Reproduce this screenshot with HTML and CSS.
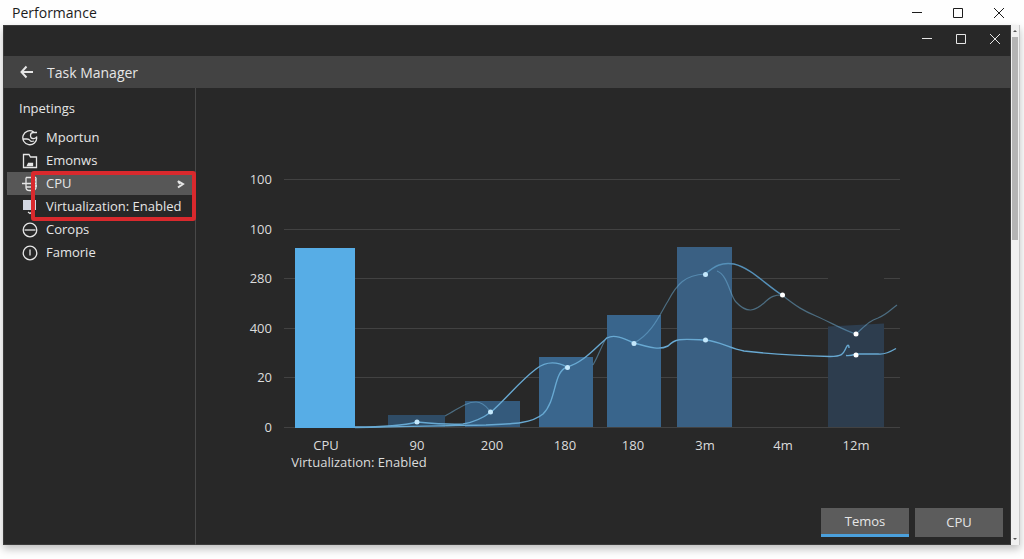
FILE: index.html
```html
<!DOCTYPE html>
<html lang="en">
  <head>
    <meta charset="UTF-8" />
    <meta name="viewport" content="width=device-width, initial-scale=1.0" />
    <title>Performance</title>
    <link rel="stylesheet" href="styles.css">
  </head>
  <body>
    <header class="titlebar">
      <h1 class="titlebar-name">Performance</h1>
      <div class="controls">
        <button class="control" aria-label="Minimize"><svg width="12" height="12" viewBox="0 0 12 12"><path d="M1 5.500h10" /></svg></button>
        <button class="control" aria-label="Maximize"><svg width="12" height="12" viewBox="0 0 12 12"><path d="M1.500 1.500h9v9h-9z" /></svg></button>
        <button class="control" aria-label="Close"><svg width="12" height="12" viewBox="0 0 12 12"><path d="M1 1l10 10M11 1L1 11" /></svg></button>
      </div>
    </header>
    <div class="frame">
      <div class="window">
        <div class="controls controls-inner">
          <button class="control" aria-label="Minimize window"><svg width="12" height="12" viewBox="0 0 12 12"><path d="M1 5.500h10" /></svg></button>
          <button class="control" aria-label="Maximize window"><svg width="12" height="12" viewBox="0 0 12 12"><path d="M1.500 1.500h9v9h-9z" /></svg></button>
          <button class="control" aria-label="Close window"><svg width="12" height="12" viewBox="0 0 12 12"><path d="M1 1l10 10M11 1L1 11" /></svg></button>
        </div>
        <div class="toolbar">
          <button class="back" aria-label="Back"><svg width="14" height="14" viewBox="0 0 14 14"><path d="M13 7H1.500M6.500 1.500L1.500 7l5 5.500" /></svg></button>
          <h2 class="toolbar-name">Task Manager</h2>
        </div>
        <div class="content">
          <nav class="sidebar">
            <h3 class="sidebar-name">Inpetings</h3>
            <a class="item" href="#mportun">
              <svg class="icon" viewBox="0 0 16 16"><path d="M11.500 1.800A7 7 0 1 0 14.800 7.500M15 2.500H11.500Q8.500 2.500 8.500 5.500T11 8.500Q13.500 9 15 6.500M1 9h4q2 0 3 1.500t4 .5" /></svg>
              Mportun
            </a>
            <a class="item" href="#emonws">
              <svg class="icon" viewBox="0 0 16 16"><path d="M1.500 14.500v-13h5.500l1.500 2.500h6v10.500z" /><path d="M5.500 12.500l1-2h4v2z" fill="currentColor" /></svg>
              Emonws
            </a>
            <div class="marked">
              <a class="item item-active" href="#cpu">
                <svg class="icon" viewBox="0 0 16 16"><path d="M4 1.500h10M4 1.500v10q0 3 3.500 3H10q4 0 4-3.500V1.500M0 7.500h14M4 11h5M10 4h4M10 10h5" /></svg>
                CPU
                <svg class="chevron" viewBox="0 0 8 10"><path d="M1 2l5 3-5 3.500M1 2l2 3" /></svg>
              </a>
              <a class="item" href="#virtualization">
                <svg class="icon" viewBox="0 0 16 16"><path d="M1 1h9v10H1zM11.500 1H14v10h-2.500z" fill="#d3d7e2" stroke="none" /><path d="M6 13l2 1.500 2-1.500" /></svg>
                Virtualization: Enabled
              </a>
            </div>
            <a class="item" href="#corops">
              <svg class="icon" viewBox="0 0 16 16"><circle cx="8" cy="8" r="6.800" /><path d="M2.500 8h11" /></svg>
              Corops
            </a>
            <a class="item" href="#famorie">
              <svg class="icon" viewBox="0 0 16 16"><circle cx="8" cy="8" r="6.800" /><path d="M8 4.500v6" /></svg>
              Famorie
            </a>
          </nav>
          <main class="main">
            <svg class="chart" viewBox="196 88 815 412" role="img" aria-label="CPU performance chart">
              <g class="grid">
                <path d="M284 179.500h616M284 229.500h616M284 278.500h544M884 278.500h16M284 328.500h616M284 377.500h616M284 427.500h616" />
              </g>
              <g class="bars">
                <rect x="388" y="415" width="57" height="12" fill="#2f4c66" />
                <rect x="465" y="401" width="55" height="26" fill="#345a7c" />
                <rect x="539" y="357" width="54" height="70" fill="#3a668d" />
                <rect x="607" y="315" width="54" height="112" fill="#39658c" />
                <rect x="677" y="247" width="55" height="180" fill="#3a6083" />
                <path d="M828 326.500l56-3V427h-56z" fill="#2d3d4e" />
              </g>
              <g class="lines">
                <path class="line-dim" d="M445 416C457 410 465 402 476 402C485 402 489 411 491 412" />
                <path class="line-dim" d="M593 365C600 353 601 346 607 337" />
                <path class="line-dim" d="M634 343C652 334 660 314 668 301C677 284 685 275 705 274" />
                <path class="line-dim" d="M717 271C728 275 730 296 736 302C747 314 755 311 764 303C771 296 775 295 782 295" />
                <path class="line-mid" d="M705 274C715 266 721 262 734 264C751 268 766 285 782 295" />
                <path class="line-dim" d="M782 295C797 307 804 311 816 316C832 323 845 331 856 334C866 325 869 321 878 318C886 315 889 311 897 305" />
                <path class="line" d="M355 427C385 427 402 426 417 422C438 424 449 425 463 424C475 422 483 418 491 412C505 400 520 381 536 369C545 362 556 361 567 367C583 363 596 347 607 338C614 334 623 338 634 343C651 348 660 350 668 346C676 338 681 339 705 340C719 341 729 348 744 351C770 354 809 356 830 356.500C845 356 843 353 847 346Q849 344 849 348" />
                <path class="line" d="M355 427.500C404 427 467 425 486 425C511 424 531 424 543 414C557 400 553 372 567 367" />
                <path class="line" d="M846 355.500Q850 356 856 354L878 354Q885 355 896 348.500" />
              </g>
              <g class="points">
                <circle cx="417" cy="422" r="2.500" />
                <circle cx="490.500" cy="412" r="2.500" />
                <circle cx="567.500" cy="367.500" r="2.500" />
                <circle cx="634" cy="343.500" r="2.500" />
                <circle cx="705.500" cy="340" r="2.500" />
                <circle cx="705.500" cy="274.500" r="2.500" />
                <circle class="point-white" cx="782.500" cy="295" r="2.500" />
                <circle class="point-white" cx="856" cy="334" r="2.500" />
                <circle class="point-white" cx="856" cy="355" r="2.500" />
              </g>
              <!-- the CPU bar covers the grid -->
              <rect x="295" y="248" width="60" height="180" fill="#57ade6" />
              <g class="labels labels-y">
                <text x="272" y="184">100</text>
                <text x="272" y="234">100</text>
                <text x="272" y="283">280</text>
                <text x="272" y="333">400</text>
                <text x="272" y="382">20</text>
                <text x="272" y="432">0</text>
              </g>
              <g class="labels labels-x">
                <text x="326" y="450">CPU</text>
                <text x="417" y="450">90</text>
                <text x="492" y="450">200</text>
                <text x="565" y="450">180</text>
                <text x="633" y="450">180</text>
                <text x="705" y="450">3m</text>
                <text x="783" y="450">4m</text>
                <text x="856" y="450">12m</text>
                <text x="359" y="467">Virtualization: Enabled</text>
              </g>
            </svg>
            <div class="actions">
              <button class="btn btn-active">Temos</button>
              <button class="btn">CPU</button>
            </div>
          </main>
        </div>
      </div>
      <div class="scrollbar">
        <svg class="arrow" viewBox="0 0 8 8"><path d="M2 5h4L4 3z" /></svg>
        <div class="thumb"></div>
        <svg class="arrow" viewBox="0 0 8 8"><path d="M2 3h4L4 5z" /></svg>
      </div>
    </div>
  </body>
</html>
```

FILE: styles.css
```css
* {
  box-sizing: border-box;
}

body {
  margin: 0;
  min-height: 100vh;
  display: flex;
  flex-direction: column;
  background: #fefefe;
  font-family: "Open Sans", "Noto Sans", sans-serif;
  font-size: 13px;
  line-height: 23px;
  color: #e6e6e6;
}

h1,
h2,
h3 {
  margin: 0;
  font-size: 14px;
  font-weight: 400;
}

button {
  padding: 0;
  border: 0;
  background: none;
  color: inherit;
  font: inherit;
}

svg {
  display: block;
  fill: none;
  stroke: currentColor;
}

.titlebar {
  display: flex;
  justify-content: space-between;
  height: 25px;
  padding: 0 19px 0 12px;
  color: #1c1c1c;
}

.titlebar-name {
  line-height: 26px;
}

.controls {
  display: flex;
  align-items: center;
  gap: 29px;
}

.controls-inner {
  justify-content: flex-end;
  gap: 22px;
  height: 31px;
  padding: 0 10px 4px 0;
}

.frame {
  flex: 1;
  display: flex;
  margin: 0 4px 14px 3px;
  box-shadow: 0 4px 8px rgba(0, 0, 0, 0.25);
}

.window {
  flex: 1;
  display: flex;
  flex-direction: column;
  background: #282828;
  box-shadow: inset 0 0 0 1px #3c3c3c;
}

.toolbar {
  display: flex;
  align-items: center;
  gap: 13px;
  height: 32px;
  padding-left: 17px;
  background: #434343;
}

.back svg {
  stroke-width: 2;
}

.content {
  flex: 1;
  display: flex;
}

.sidebar {
  width: 193px;
  padding: 9px 3px 0 4px;
  border-right: 1px solid #484848;
}

.sidebar-name {
  padding-left: 12px;
  margin-bottom: 6px;
  font-size: 13px;
}

.item {
  display: flex;
  align-items: center;
  gap: 8px;
  height: 23px;
  padding-left: 15px;
  color: inherit;
  text-decoration: none;
}

.item-active {
  background: #575757;
}

.icon {
  width: 16px;
  height: 16px;
  stroke-width: 1.3;
}

.chevron {
  width: 8px;
  height: 10px;
  margin: 0 7px 0 auto;
  stroke-width: 2;
}

.marked {
  position: relative;
}

/* red frame round the CPU entry and its virtualization line */
.marked::after {
  content: "";
  position: absolute;
  top: -1px;
  right: -4px;
  bottom: -3px;
  left: 24px;
  border: 4px solid #d9292d;
  border-radius: 3px;
  pointer-events: none;
}

.main {
  flex: 1;
  display: flex;
  flex-direction: column;
}

.chart {
  width: 100%;
}

.grid {
  stroke: #424242;
}

.bars,
.chart > rect {
  stroke: none;
}

.line {
  stroke: #68a9d2;
  stroke-width: 1.4;
}

.line-mid {
  stroke: #5590b8;
  stroke-width: 1.4;
}

.line-dim {
  stroke: rgba(112, 178, 218, 0.5);
  stroke-width: 1.2;
}

.points {
  fill: #c4e8fc;
  stroke: none;
}

.point-white {
  fill: #fff;
}

.labels {
  fill: #dcdcdc;
  stroke: none;
}

.labels-y {
  text-anchor: end;
}

.labels-x {
  text-anchor: middle;
}

.actions {
  display: flex;
  justify-content: flex-end;
  gap: 6px;
  margin-top: auto;
  padding: 8px;
}

.btn {
  width: 88px;
  height: 29px;
  background: #5c5c5c;
}

.btn-active {
  border-bottom: 3px solid #4ba0dc;
}

.scrollbar {
  width: 9px;
  display: flex;
  flex-direction: column;
  align-items: center;
  background: #f0f0f0;
  border-right: 1px solid #c8c8c8;
}

.arrow {
  width: 8px;
  height: 12px;
  fill: #555;
  stroke: none;
}

.thumb {
  flex: 0 0 39%;
  width: 6px;
  margin-bottom: auto;
  background: #b4b4b4;
}
```
